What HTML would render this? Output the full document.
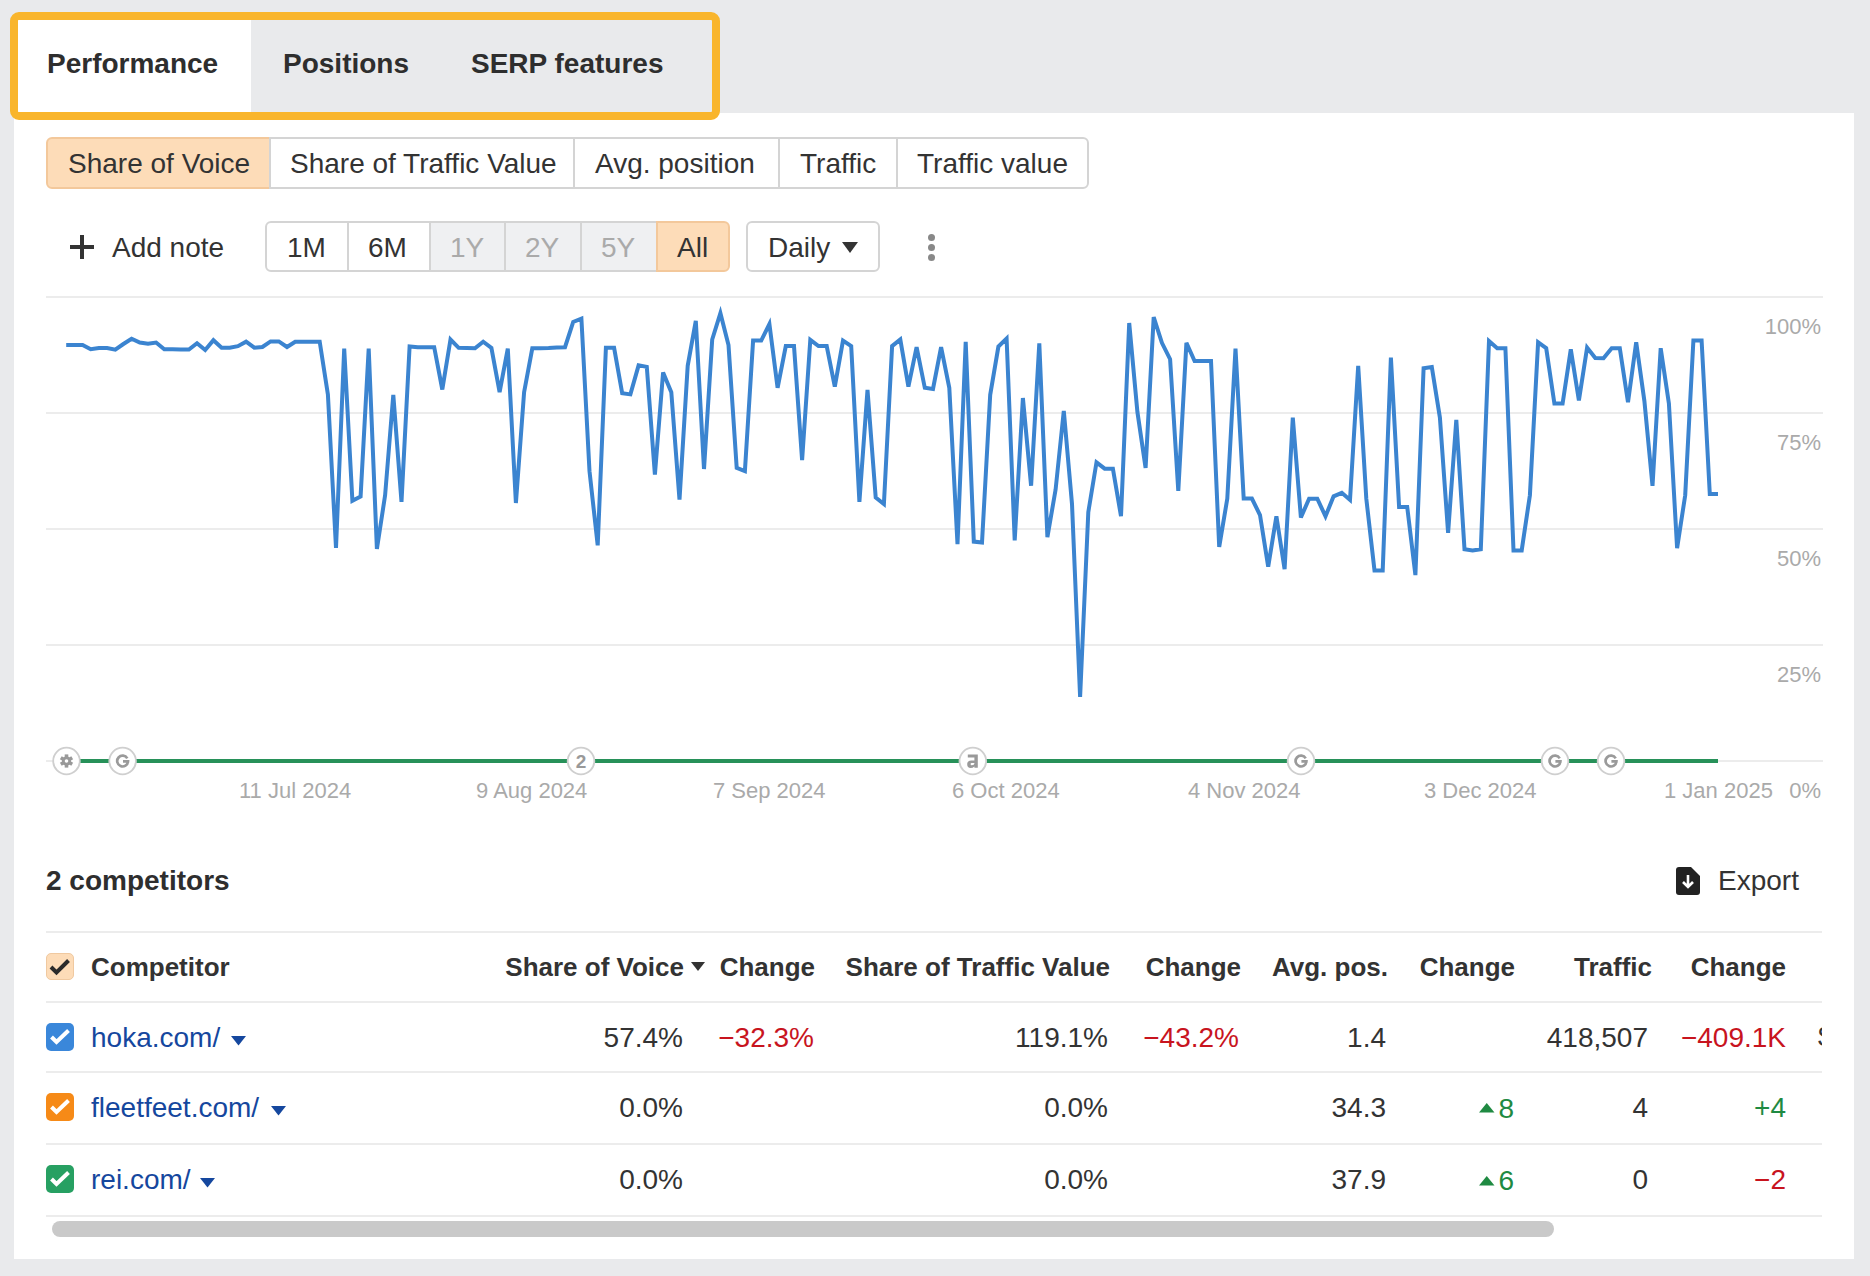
<!DOCTYPE html>
<html><head><meta charset="utf-8">
<style>
*{box-sizing:border-box;margin:0;padding:0}
html,body{width:1870px;height:1276px;overflow:hidden;background:#e9eaec;font-family:"Liberation Sans",sans-serif;color:#333}
.a{position:absolute;white-space:nowrap;line-height:1}
.panel{position:absolute;left:14px;top:113px;width:1840px;height:1146px;background:#fff}
.tabbox{position:absolute;left:10px;top:12px;width:710px;height:108px;border:8px solid #f9b52c;border-radius:9px;background:#e9eaec;overflow:hidden}
.tabw{position:absolute;left:0;top:0;width:233px;height:92px;background:#fff}
.b28{font-size:28px;font-weight:700;color:#2e2e2e}
.n28{font-size:28px;color:#333}
.btn{position:absolute;border:2px solid #d4d4d4;background:#fff}
.grid{position:absolute;left:46px;width:1777px;height:2px;background:#ececec}
.yl{font-size:22px;color:#aaa}
.th{font-size:26px;font-weight:700;color:#333}
.hl{position:absolute;left:46px;width:1776px;height:2px;background:#ececec}
.red{color:#c8141e}
.grn{color:#1f8a42}
.lnk{color:#15479e}
.cb{position:absolute;left:46px;width:28px;height:28px;border-radius:5px}
</style></head><body>

<div class="panel"></div>
<div class="tabbox"><div class="tabw"></div></div>
<div class="a b28" style="left:47px;top:50.3px">Performance</div>
<div class="a b28" style="left:283px;top:50.3px">Positions</div>
<div class="a b28" style="left:471px;top:50.3px">SERP features</div>

<!-- metric buttons -->
<div class="btn" style="left:46px;top:137px;width:225px;height:52px;border-radius:6px 0 0 6px;background:#fddcb8;border-color:#f3c89b"></div>
<div class="btn" style="left:269px;top:137px;width:306px;height:52px"></div>
<div class="btn" style="left:573px;top:137px;width:207px;height:52px"></div>
<div class="btn" style="left:778px;top:137px;width:120px;height:52px"></div>
<div class="btn" style="left:896px;top:137px;width:193px;height:52px;border-radius:0 6px 6px 0"></div>
<div class="a n28" style="left:68px;top:149.6px">Share of Voice</div>
<div class="a n28" style="left:290px;top:149.6px">Share of Traffic Value</div>
<div class="a n28" style="left:595px;top:149.6px">Avg. position</div>
<div class="a n28" style="left:800px;top:149.6px">Traffic</div>
<div class="a n28" style="left:917px;top:149.6px">Traffic value</div>

<!-- add note row -->
<div class="a" style="left:70px;top:245px;width:24px;height:4px;background:#333"></div>
<div class="a" style="left:80px;top:235px;width:4px;height:24px;background:#333"></div>
<div class="a n28" style="left:112px;top:233.5px">Add note</div>
<div class="btn" style="left:265px;top:221px;width:84px;height:51px;border-radius:6px 0 0 6px"></div>
<div class="btn" style="left:347px;top:221px;width:84px;height:51px"></div>
<div class="btn" style="left:429px;top:221px;width:77px;height:51px;background:#eff0f2"></div>
<div class="btn" style="left:504px;top:221px;width:78px;height:51px;background:#eff0f2"></div>
<div class="btn" style="left:580px;top:221px;width:78px;height:51px;background:#eff0f2"></div>
<div class="btn" style="left:656px;top:221px;width:74px;height:51px;border-radius:0 6px 6px 0;background:#fddcb8;border-color:#f3c89b"></div>
<div class="a n28" style="left:287px;top:233.5px">1M</div>
<div class="a n28" style="left:368px;top:233.5px">6M</div>
<div class="a n28" style="left:450px;top:233.5px;color:#aaa">1Y</div>
<div class="a n28" style="left:525px;top:233.5px;color:#aaa">2Y</div>
<div class="a n28" style="left:601px;top:233.5px;color:#aaa">5Y</div>
<div class="a n28" style="left:677px;top:233.5px">All</div>
<div class="btn" style="left:746px;top:221px;width:134px;height:51px;border-radius:6px"></div>
<div class="a n28" style="left:768px;top:233.5px">Daily</div>
<svg class="a" style="left:842px;top:242px" width="16" height="11"><path d="M0 0H16L8 11Z" fill="#333"/></svg>
<div class="a" style="left:928px;top:234px;width:7px;height:7px;border-radius:50%;background:#888"></div>
<div class="a" style="left:928px;top:244px;width:7px;height:7px;border-radius:50%;background:#888"></div>
<div class="a" style="left:928px;top:254px;width:7px;height:7px;border-radius:50%;background:#888"></div>

<!-- chart grid -->
<div class="grid" style="top:296px"></div>
<div class="grid" style="top:412px"></div>
<div class="grid" style="top:528px"></div>
<div class="grid" style="top:644px"></div>
<div class="grid" style="top:760px"></div>
<div class="a yl" style="right:49px;top:316.4px">100%</div>
<div class="a yl" style="right:49px;top:432.4px">75%</div>
<div class="a yl" style="right:49px;top:548.4px">50%</div>
<div class="a yl" style="right:49px;top:664.4px">25%</div>
<div class="a yl" style="right:49px;top:780.4px">0%</div>
<div class="a yl" style="left:239px;top:780.4px">11 Jul 2024</div>
<div class="a yl" style="left:476px;top:780.4px">9 Aug 2024</div>
<div class="a yl" style="left:713px;top:780.4px">7 Sep 2024</div>
<div class="a yl" style="left:952px;top:780.4px">6 Oct 2024</div>
<div class="a yl" style="left:1188px;top:780.4px">4 Nov 2024</div>
<div class="a yl" style="left:1424px;top:780.4px">3 Dec 2024</div>
<div class="a yl" style="left:1664px;top:780.4px">1 Jan 2025</div>

<svg class="a" style="left:0;top:0" width="1870" height="820" viewBox="0 0 1870 820">
<path id="line" fill="none" stroke="#3b84d0" stroke-width="4" stroke-linejoin="miter" d="M66.2 345.0 L74.4 345.0 L82.6 345.0 L90.7 349.2 L98.9 348.1 L107.1 348.0 L115.3 349.6 L123.4 344.0 L131.6 338.7 L139.8 342.5 L148.0 343.7 L156.1 342.5 L164.3 349.2 L172.5 349.3 L180.7 349.4 L188.9 349.5 L197.0 343.2 L205.2 350.0 L213.4 340.2 L221.6 347.7 L229.7 347.7 L237.9 346.2 L246.1 341.7 L254.3 347.7 L262.4 347.0 L270.6 341.4 L278.8 341.4 L287.0 347.0 L295.2 341.7 L303.3 341.7 L311.5 341.7 L319.7 341.7 L327.9 394.4 L336.0 548.0 L344.2 348.7 L352.4 500.8 L360.6 496.4 L368.7 348.7 L376.9 549.0 L385.1 495.3 L393.3 394.8 L401.5 501.9 L409.6 346.5 L417.8 347.2 L426.0 347.2 L434.2 347.2 L442.3 389.5 L450.5 339.5 L458.7 347.8 L466.9 348.0 L475.0 348.3 L483.2 341.7 L491.4 347.8 L499.6 392.2 L507.8 348.7 L515.9 503.0 L524.1 392.2 L532.3 348.3 L540.5 348.3 L548.6 348.0 L556.8 347.5 L565.0 347.2 L573.2 321.9 L581.4 318.7 L589.5 471.2 L597.7 545.3 L605.9 347.8 L614.1 347.8 L622.2 393.3 L630.4 394.4 L638.6 365.4 L646.8 366.9 L654.9 474.5 L663.1 372.4 L671.3 392.2 L679.5 499.7 L687.7 365.8 L695.8 320.8 L704.0 469.0 L712.2 339.5 L720.4 313.2 L728.5 345.0 L736.7 467.9 L744.9 471.2 L753.1 340.6 L761.2 340.6 L769.4 324.1 L777.6 387.8 L785.8 346.1 L794.0 346.1 L802.1 460.2 L810.3 339.9 L818.5 346.1 L826.7 346.1 L834.8 386.7 L843.0 340.6 L851.2 346.1 L859.4 501.9 L867.5 390.0 L875.7 497.5 L883.9 504.1 L892.1 346.1 L900.3 339.5 L908.4 386.7 L916.6 347.2 L924.8 387.8 L933.0 388.9 L941.1 347.2 L949.3 387.8 L957.5 544.1 L965.7 341.8 L973.8 541.6 L982.0 542.6 L990.2 394.8 L998.4 346.6 L1006.6 338.6 L1014.7 540.4 L1022.9 398.0 L1031.1 485.7 L1039.3 343.4 L1047.4 537.1 L1055.6 489.6 L1063.8 410.9 L1072.0 504.0 L1080.1 696.8 L1088.3 512.1 L1096.5 462.3 L1104.7 468.7 L1112.9 468.7 L1121.0 516.2 L1129.2 323.0 L1137.4 411.9 L1145.6 467.9 L1153.7 317.1 L1161.9 342.8 L1170.1 359.2 L1178.3 490.9 L1186.4 342.8 L1194.6 361.0 L1202.8 361.0 L1211.0 361.0 L1219.2 546.9 L1227.3 498.6 L1235.5 348.7 L1243.7 498.6 L1251.9 498.6 L1260.0 515.0 L1268.2 566.6 L1276.4 516.2 L1284.6 569.2 L1292.8 417.6 L1300.9 517.5 L1309.1 498.7 L1317.3 498.7 L1325.5 516.3 L1333.6 496.3 L1341.8 492.8 L1350.0 499.9 L1358.2 365.8 L1366.3 498.7 L1374.5 570.4 L1382.7 570.4 L1390.9 357.6 L1399.1 506.9 L1407.2 506.9 L1415.4 575.1 L1423.6 368.2 L1431.8 367.0 L1439.9 417.6 L1448.1 532.8 L1456.3 419.9 L1464.5 549.2 L1472.6 550.4 L1480.8 549.2 L1489.0 341.1 L1497.2 348.2 L1505.4 348.2 L1513.5 550.4 L1521.7 550.4 L1529.9 495.2 L1538.1 342.3 L1546.2 348.2 L1554.4 403.5 L1562.6 403.5 L1570.8 349.4 L1578.9 400.5 L1587.1 347.6 L1595.3 358.0 L1603.5 358.3 L1611.7 348.2 L1619.8 348.2 L1628.0 402.3 L1636.2 342.3 L1644.4 401.1 L1652.5 485.8 L1660.7 348.2 L1668.9 403.5 L1677.1 548.1 L1685.2 495.2 L1693.4 340.4 L1701.6 340.4 L1709.8 494.0 L1718.0 494.0"/>
<line x1="80" y1="761" x2="1718" y2="761" stroke="#279159" stroke-width="4"/>
<g transform="translate(66.5 761)"><circle r="13.3" fill="#fff" stroke="#cfcfcf" stroke-width="1.8"/><g fill="#999"><circle r="4.6"/><rect x="-1.8" y="-6.6" width="3.6" height="4" transform="rotate(0)"/><rect x="-1.8" y="-6.6" width="3.6" height="4" transform="rotate(60)"/><rect x="-1.8" y="-6.6" width="3.6" height="4" transform="rotate(120)"/><rect x="-1.8" y="-6.6" width="3.6" height="4" transform="rotate(180)"/><rect x="-1.8" y="-6.6" width="3.6" height="4" transform="rotate(240)"/><rect x="-1.8" y="-6.6" width="3.6" height="4" transform="rotate(300)"/><circle r="1.8" fill="#fff"/></g></g>
<g transform="translate(122.6 761)"><circle r="13.3" fill="#fff" stroke="#cfcfcf" stroke-width="1.8"/><path d="M4.7 -2.6A5.4 5.4 0 1 0 5.4 0.4H0.4" fill="none" stroke="#9a9a9a" stroke-width="2.7"/></g>
<g transform="translate(581 761)"><circle r="13.3" fill="#fff" stroke="#cfcfcf" stroke-width="1.8"/><text x="0" y="7" text-anchor="middle" font-family="Liberation Sans" font-weight="700" font-size="19" fill="#999">2</text></g>
<g transform="translate(972.8 761)"><circle r="13.3" fill="#fff" stroke="#cfcfcf" stroke-width="1.8"/><path d="M-5 -6.6H5V6.8H1.6V5.4Q0 7 -2.2 7Q-5.6 7 -5.6 3.2Q-5.6 -0.6 -1.5 -0.6H1.6V-3.4H-5Z M1.6 1.9H-1.2Q-2.2 1.9 -2.2 3Q-2.2 4.2 -1 4.2Q1.6 4.2 1.6 2.4Z" fill="#999" fill-rule="evenodd"/></g>
<g transform="translate(1301 761)"><circle r="13.3" fill="#fff" stroke="#cfcfcf" stroke-width="1.8"/><path d="M4.7 -2.6A5.4 5.4 0 1 0 5.4 0.4H0.4" fill="none" stroke="#9a9a9a" stroke-width="2.7"/></g>
<g transform="translate(1555 761)"><circle r="13.3" fill="#fff" stroke="#cfcfcf" stroke-width="1.8"/><path d="M4.7 -2.6A5.4 5.4 0 1 0 5.4 0.4H0.4" fill="none" stroke="#9a9a9a" stroke-width="2.7"/></g>
<g transform="translate(1611 761)"><circle r="13.3" fill="#fff" stroke="#cfcfcf" stroke-width="1.8"/><path d="M4.7 -2.6A5.4 5.4 0 1 0 5.4 0.4H0.4" fill="none" stroke="#9a9a9a" stroke-width="2.7"/></g>
</svg>

<!-- table -->
<div class="a b28" style="left:46px;top:867.3px">2 competitors</div>
<svg class="a" style="left:1676px;top:867px" width="24" height="28"><path d="M3 0H15L24 9V25Q24 28 21 28H3Q0 28 0 25V3Q0 0 3 0Z" fill="#222"/><path d="M12 8V19M7 15L12 20L17 15" stroke="#fff" stroke-width="2.6" fill="none"/></svg>
<div class="a n28" style="left:1718px;top:867.3px">Export</div>

<div class="hl" style="top:931px"></div>
<div class="hl" style="top:1001px"></div>
<div class="hl" style="top:1071px"></div>
<div class="hl" style="top:1143px"></div>
<div class="hl" style="top:1215px"></div>

<!-- header row -->
<div class="a" style="left:46px;top:953px;width:28px;height:27px;border-radius:5px;background:#fddcb8;border:1.5px solid #f0c9a0"></div>
<svg class="a" style="left:46px;top:953px" width="28" height="27"><path d="M5 14L10.5 19.5L22.5 7.5" fill="none" stroke="#2b2b2b" stroke-width="4"/></svg>
<div class="a th" style="left:91px;top:953.7px">Competitor</div>
<div class="a th" style="right:1186px;top:953.7px">Share of Voice</div>
<svg class="a" style="left:691px;top:962px" width="14" height="10"><path d="M0 0H14L7 9Z" fill="#333"/></svg>
<div class="a th" style="right:1055px;top:953.7px">Change</div>
<div class="a th" style="right:760px;top:953.7px">Share of Traffic Value</div>
<div class="a th" style="right:629px;top:953.7px">Change</div>
<div class="a th" style="right:482px;top:953.7px">Avg. pos.</div>
<div class="a th" style="right:355px;top:953.7px">Change</div>
<div class="a th" style="right:218px;top:953.7px">Traffic</div>
<div class="a th" style="right:84px;top:953.7px">Change</div>

<!-- rows -->
<div class="a cb" style="top:1023px;background:#3a87da"></div>
<svg class="a" style="left:46px;top:1023px" width="28" height="28"><path d="M5.5 14L10.5 19L22.5 7.5" fill="none" stroke="#fff" stroke-width="4"/></svg>
<div class="a n28 lnk" style="left:91px;top:1023.6px">hoka.com/</div>
<svg class="a" style="left:231px;top:1036px" width="16" height="10"><path d="M0 0H15L7.5 9.5Z" fill="#15479e"/></svg>
<div class="a n28" style="right:1187px;top:1023.6px">57.4%</div>
<div class="a n28 red" style="right:1056px;top:1023.6px">−32.3%</div>
<div class="a n28" style="right:762px;top:1023.6px">119.1%</div>
<div class="a n28 red" style="right:631px;top:1023.6px">−43.2%</div>
<div class="a n28" style="right:484px;top:1023.6px">1.4</div>
<div class="a n28" style="right:222px;top:1023.6px">418,507</div>
<div class="a n28 red" style="right:84px;top:1023.6px">−409.1K</div>
<div class="a" style="left:1810px;top:1010px;width:12px;height:50px;overflow:hidden"><div class="a n28" style="left:8px;top:12.8px">$</div></div>

<div class="a cb" style="top:1093px;background:#f68a17"></div>
<svg class="a" style="left:46px;top:1093px" width="28" height="28"><path d="M5.5 14L10.5 19L22.5 7.5" fill="none" stroke="#fff" stroke-width="4"/></svg>
<div class="a n28 lnk" style="left:91px;top:1093.6px">fleetfeet.com/</div>
<svg class="a" style="left:271px;top:1106px" width="16" height="10"><path d="M0 0H15L7.5 9.5Z" fill="#15479e"/></svg>
<div class="a n28" style="right:1187px;top:1093.6px">0.0%</div>
<div class="a n28" style="right:762px;top:1093.6px">0.0%</div>
<div class="a n28" style="right:484px;top:1093.6px">34.3</div>
<svg class="a" style="left:1479px;top:1103px" width="16" height="10"><path d="M0 9.5H15.5L7.75 0Z" fill="#1f8a42"/></svg>
<div class="a n28 grn" style="right:356px;top:1095.1px">8</div>
<div class="a n28" style="right:222px;top:1093.6px">4</div>
<div class="a n28 grn" style="right:84px;top:1093.6px">+4</div>

<div class="a cb" style="top:1165px;background:#27a062"></div>
<svg class="a" style="left:46px;top:1165px" width="28" height="28"><path d="M5.5 14L10.5 19L22.5 7.5" fill="none" stroke="#fff" stroke-width="4"/></svg>
<div class="a n28 lnk" style="left:91px;top:1165.5px">rei.com/</div>
<svg class="a" style="left:200px;top:1178px" width="16" height="10"><path d="M0 0H15L7.5 9.5Z" fill="#15479e"/></svg>
<div class="a n28" style="right:1187px;top:1165.5px">0.0%</div>
<div class="a n28" style="right:762px;top:1165.5px">0.0%</div>
<div class="a n28" style="right:484px;top:1165.5px">37.9</div>
<svg class="a" style="left:1479px;top:1176px" width="16" height="10"><path d="M0 9.5H15.5L7.75 0Z" fill="#1f8a42"/></svg>
<div class="a n28 grn" style="right:356px;top:1167.3px">6</div>
<div class="a n28" style="right:222px;top:1165.5px">0</div>
<div class="a n28 red" style="right:84px;top:1165.5px">−2</div>

<div class="a" style="left:52px;top:1221px;width:1502px;height:16px;border-radius:8px;background:#c9c9c9"></div>
</body></html>
